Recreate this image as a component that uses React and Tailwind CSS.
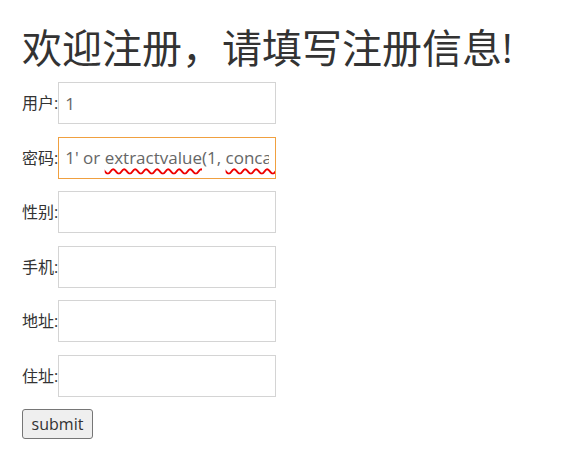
import React from "react";

const font = { fontFamily: '"Open Sans", "Noto Sans CJK SC", sans-serif' };

function Row({ label, value, focused, squiggle }) {
  return (
    <div className="flex items-center">
      <span className="text-[16px] text-[#333]">{label}</span>
      <div className="relative">
        <input
          readOnly
          defaultValue={value}
          className={
            "block h-[42px] w-[218px] bg-white px-[6px] text-[17px] text-[#666] outline-none border " +
            (focused ? "border-[#f0a040]" : "border-[#d4d4d4]")
          }
        />
        {squiggle && (
          <div className="pointer-events-none absolute inset-[1px] overflow-hidden whitespace-nowrap px-[6px] text-[17px] leading-[40px] text-transparent">
            1' or{" "}
            <span className="underline decoration-wavy decoration-[#e00] decoration-[1.5px] underline-offset-[4px]">extractvalue</span>
            (1,{" "}
            <span className="underline decoration-wavy decoration-[#e00] decoration-[1.5px] underline-offset-[4px]">concat</span>
          </div>
        )}
      </div>
    </div>
  );
}

export default function App() {
  return (
    <div className="min-h-[460px] bg-white pl-[22px] pt-[22px]" style={font}>
      <h1 className="text-[40px] leading-[52px] text-[#333] font-normal">欢迎注册，请填写注册信息!</h1>
      <div className="mt-[8px] flex flex-col gap-[12.5px]">
        <Row label="用户:" value="1" />
        <Row label="密码:" value="1' or extractvalue(1, concat(0x7e, database()))#" focused squiggle />
        <Row label="性别:" value="" />
        <Row label="手机:" value="" />
        <Row label="地址:" value="" />
        <Row label="住址:" value="" />
      </div>
      <button className="mt-[12px] h-[30px] w-[71px] rounded-[3px] border border-[#767676] bg-[#efefef] text-[16px] text-[#333]">
        submit
      </button>
    </div>
  );
}
